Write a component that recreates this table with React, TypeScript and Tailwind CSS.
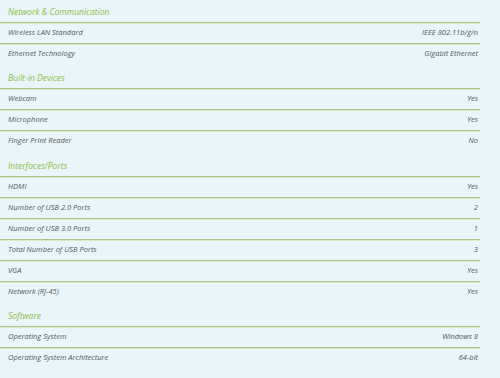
type Spec = { label: string; value: string };
type Section = { title: string; specs: Spec[] };

const sections: Section[] = [
  {
    title: "Network & Communication",
    specs: [
      { label: "Wireless LAN Standard", value: "IEEE 802.11b/g/n" },
      { label: "Ethernet Technology", value: "Gigabit Ethernet" },
    ],
  },
  {
    title: "Built-in Devices",
    specs: [
      { label: "Webcam", value: "Yes" },
      { label: "Microphone", value: "Yes" },
      { label: "Finger Print Reader", value: "No" },
    ],
  },
  {
    title: "Interfaces/Ports",
    specs: [
      { label: "HDMI", value: "Yes" },
      { label: "Number of USB 2.0 Ports", value: "2" },
      { label: "Number of USB 3.0 Ports", value: "1" },
      { label: "Total Number of USB Ports", value: "3" },
      { label: "VGA", value: "Yes" },
      { label: "Network (RJ-45)", value: "Yes" },
    ],
  },
  {
    title: "Software",
    specs: [
      { label: "Operating System", value: "Windows 8" },
      { label: "Operating System Architecture", value: "64-bit" },
    ],
  },
];

// green divider under headings and rows
const rule = "border-b border-[#aac48e] shadow-[0_1px_0_#dbeac4]";

export default function App() {
  return (
    <div className="min-h-screen bg-[#e9f5f9] pt-[2px] font-['Open_Sans',sans-serif] italic">
      <div className="flex w-[480px] flex-col gap-[4px]">
        {sections.map((section, s) => (
          <div key={section.title} className={s === 2 ? "mt-[1px]" : ""}>
            <div
              className={`flex h-[21px] items-center pl-[8px] text-[8.5px] font-medium text-[#8cc043] ${rule}`}
            >
              {section.title}
            </div>
            {section.specs.map((spec, i) => (
              <div
                key={spec.label}
                className={`flex items-center justify-between pl-[8px] pr-[2px] text-[7.5px] text-[#55595c] ${
                  i < section.specs.length - 1 ? `h-[21px] ${rule}` : "h-[20px]"
                }`}
              >
                <span>{spec.label}</span>
                <span>{spec.value}</span>
              </div>
            ))}
          </div>
        ))}
      </div>
    </div>
  );
}
